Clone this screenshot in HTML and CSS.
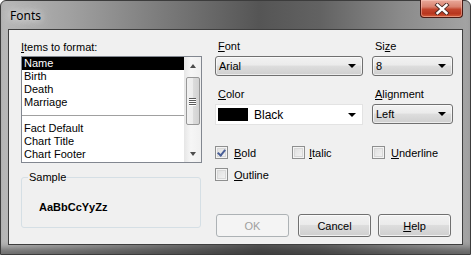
FILE: index.html
```html
<!DOCTYPE html>
<html lang="en">
  <head>
    <meta charset="UTF-8" />
    <title>Fonts</title>
    <link rel="stylesheet" href="styles.css">
  </head>
  <body>
    <div class="window">
      <div class="titlebar">
        <span class="title">Fonts</span>
        <button class="close-btn" aria-label="Close">
          <svg width="16" height="12" viewBox="0 0 16 12">
            <path d="M3.5 2 L12.5 10 M12.5 2 L3.5 10" stroke="#4a2a25" stroke-width="4.2" stroke-linecap="square" />
            <path d="M3.5 2 L12.5 10 M12.5 2 L3.5 10" stroke="#ffffff" stroke-width="2.4" stroke-linecap="square" />
          </svg>
        </button>
      </div>

      <div class="client">
        <div class="left-col">
          <div class="label"><u>I</u>tems to format:</div>
          <div class="listbox">
            <ul class="items">
              <li class="selected">Name</li>
              <li>Birth</li>
              <li>Death</li>
              <li>Marriage</li>
              <li class="separator"></li>
              <li>Fact Default</li>
              <li>Chart Title</li>
              <li>Chart Footer</li>
            </ul>
            <div class="scrollbar">
              <div class="arrow up"></div>
              <div class="thumb"><span></span><span></span><span></span><span></span></div>
              <div class="arrow down"></div>
            </div>
          </div>

          <fieldset class="sample">
            <legend>Sample</legend>
            <div class="sample-text">AaBbCcYyZz</div>
          </fieldset>
        </div>

        <div class="right-col">
          <div class="field-row">
            <div class="field wide">
              <div class="label"><u>F</u>ont</div>
              <div class="combo">Arial</div>
            </div>
            <div class="field narrow">
              <div class="label">Si<u>z</u>e</div>
              <div class="combo">8</div>
            </div>
          </div>

          <div class="field-row second">
            <div class="field wide">
              <div class="label"><u>C</u>olor</div>
              <div class="combo white"><span class="swatch"></span>Black</div>
            </div>
            <div class="field narrow">
              <div class="label"><u>A</u>lignment</div>
              <div class="combo short">Left</div>
            </div>
          </div>

          <div class="checks">
            <label class="check"><span class="box checked"></span><span><u>B</u>old</span></label>
            <label class="check italic"><span class="box"></span><span><u>I</u>talic</span></label>
            <label class="check"><span class="box"></span><span><u>U</u>nderline</span></label>
          </div>
          <div class="checks outline-row">
            <label class="check"><span class="box"></span><span><u>O</u>utline</span></label>
          </div>

          <div class="buttons">
            <button class="btn disabled">OK</button>
            <button class="btn cancel">Cancel</button>
            <button class="btn help"><u>H</u>elp</button>
          </div>
        </div>
      </div>
    </div>
  </body>
</html>
```

FILE: styles.css
```css
body {
  margin: 0;
  background: #ffffff;
  font-family: "Liberation Sans", Arial, sans-serif;
  font-size: 11px;
  color: #000;
}
u {
  text-decoration: underline;
  text-underline-offset: 1px;
}
.window {
  width: 469px;
  height: 253px;
  border: 1px solid #3c3c3c;
  border-radius: 6px 6px 0 0;
  background: linear-gradient(90deg, #b8b8b8 0%, #a0a0a0 15%, #7a7a7a 35%, #555 55%, #626262 68%, #8a8a8a 85%, #a4a4a4 100%);
  display: flex;
  flex-direction: column;
  box-shadow: inset 0 -10px 6px -4px rgba(40, 40, 40, 0.5);
}
.titlebar {
  height: 28px;
  display: flex;
  align-items: flex-start;
  justify-content: space-between;
  padding: 0 7px 0 9px;
}
.title {
  font-family: "Noto Sans", "Open Sans", sans-serif;
  font-size: 12px;
  margin-top: 6px;
  color: #000;
  text-shadow: 0 0 6px #e6e6e6, 0 0 10px #dcdcdc, 0 0 14px #d0d0d0;
}
.close-btn {
  width: 43px;
  height: 18px;
  margin-top: -1px;
  padding: 0;
  border: 1px solid #4a1a14;
  border-top: none;
  border-radius: 0 0 4px 4px;
  background: linear-gradient(180deg, #e9a99b 0%, #d9826f 40%, #c2452d 55%, #b8361f 80%, #d45e3a 100%);
  box-shadow: inset 0 0 0 1px rgba(255, 210, 200, 0.45);
  display: flex;
  align-items: center;
  justify-content: center;
}
.client {
  flex: 1;
  margin: 0 7px 9px 7px;
  border: 1px solid #3e3e3e;
  background: #f0f0f0;
  display: flex;
  padding: 10px 0 0 12px;
  gap: 13px;
}
.label {
  height: 13px;
  line-height: 13px;
  white-space: nowrap;
}

/* left column */
.left-col {
  width: 181px;
  padding-top: 1px;
}
.listbox {
  margin-top: 2px;
  height: 105px;
  border: 1px solid #828790;
  background: #fff;
  display: flex;
}
.items {
  list-style: none;
  margin: 0;
  padding: 0;
  flex: 1;
}
.items li {
  height: 13px;
  line-height: 13px;
  padding-left: 2px;
}
.items li.selected {
  background: #000;
  color: #fff;
}
.items li.separator {
  display: flex;
  align-items: center;
  padding: 0;
}
.items li.separator::after {
  content: "";
  flex: 1;
  height: 1px;
  background: #a0a0a0;
}
.scrollbar {
  width: 17px;
  background: linear-gradient(90deg, #e6e6e6, #f6f6f6 40%, #f0f0f0);
  display: flex;
  flex-direction: column;
  align-items: center;
}
.arrow {
  height: 17px;
  display: flex;
  align-items: center;
  justify-content: center;
}
.arrow::after {
  content: "";
  border-left: 3.5px solid transparent;
  border-right: 3.5px solid transparent;
}
.arrow.up::after {
  border-bottom: 4px solid #4d4d4d;
}
.arrow.down {
  margin-top: auto;
}
.arrow.down::after {
  border-top: 4px solid #4d4d4d;
}
.thumb {
  width: 14px;
  height: 48px;
  margin-top: 3px;
  border: 1px solid #979797;
  border-radius: 2px;
  background: linear-gradient(90deg, #f1f1f1 0%, #ececec 50%, #dcdcdc 51%, #d2d2d2 100%);
  box-sizing: border-box;
  display: flex;
  flex-direction: column;
  align-items: center;
  justify-content: center;
  gap: 1px;
}
.thumb span {
  width: 7px;
  height: 1px;
  background: #5a5a5a;
  box-shadow: 0 1px 0 #fff;
}
.sample {
  margin: 8px 0 0 0;
  padding: 0;
  height: 57px;
  border: 1px solid #d5dfe5;
  border-radius: 3px;
  box-sizing: border-box;
  width: 180px;
}
.sample legend {
  padding: 0 1px;
  margin-left: 6px;
  line-height: 13px;
}
.sample-text {
  margin-top: 17px;
  padding-left: 17px;
  font-weight: bold;
}

/* right column */
.right-col {
  width: 238px;
  display: flex;
  flex-direction: column;
  padding-bottom: 7px;
}
.field-row {
  display: flex;
  gap: 9px;
}
.field-row.second {
  margin-top: 12px;
}
.field.wide {
  width: 148px;
}
.field.narrow {
  width: 81px;
}
.field .label {
  padding-left: 3px;
}
.combo {
  margin-top: 3px;
  height: 20px;
  box-sizing: border-box;
  border: 1px solid #707070;
  border-radius: 3px;
  background: linear-gradient(180deg, #f2f2f2 0%, #ebebeb 45%, #dddddd 50%, #cfcfcf 100%);
  box-shadow: inset 0 0 0 1px rgba(255, 255, 255, 0.6);
  padding-left: 3px;
  line-height: 18px;
  position: relative;
}
.combo::after {
  content: "";
  position: absolute;
  right: 6px;
  top: 7px;
  border-left: 4px solid transparent;
  border-right: 4px solid transparent;
  border-top: 4px solid #000;
}
.combo.white {
  height: 21px;
  border: 1px solid #e3e3e3;
  border-radius: 0;
  background: #fff;
  box-shadow: none;
  display: flex;
  align-items: center;
  padding-left: 2px;
  font-size: 12px;
}
.combo.white::after {
  top: 8px;
}
.swatch {
  width: 30px;
  height: 13px;
  background: #000;
  margin-right: 6px;
}
.checks {
  display: grid;
  grid-template-columns: 77px 80px auto;
  margin-top: 21px;
}
.outline-row {
  margin-top: 9px;
}
.check {
  display: flex;
  align-items: center;
  height: 13px;
  gap: 6px;
}
.check.italic {
  gap: 4px;
}
.box {
  width: 13px;
  height: 13px;
  box-sizing: border-box;
  border: 1px solid #8e8f8f;
  background: linear-gradient(135deg, #dcdcdc, #f6f6f6);
  box-shadow: inset 0 0 0 1px #f4f4f4, inset 0 0 0 2px #d8d8d8;
  position: relative;
}
.box.checked::after {
  content: "";
  position: absolute;
  left: 3px;
  top: 1px;
  width: 3px;
  height: 6px;
  border: solid #4a5f97;
  border-width: 0 2px 2px 0;
  transform: rotate(40deg);
}
.buttons {
  margin-top: auto;
  display: flex;
}
.btn {
  width: 73px;
  height: 23px;
  padding: 0;
  font-family: "Liberation Sans", Arial, sans-serif;
  font-size: 11px;
  color: #000;
  border: 1px solid #707070;
  border-radius: 3px;
  background: linear-gradient(180deg, #f2f2f2 0%, #ebebeb 45%, #dddddd 50%, #cfcfcf 100%);
  box-shadow: inset 0 0 0 1px rgba(255, 255, 255, 0.7);
}
.btn.disabled {
  margin-left: 1px;
  color: #a0a0a0;
  border-color: #adb2b5;
  background: #f4f4f4;
  box-shadow: none;
}
.btn.cancel {
  margin-left: 9px;
}
.btn.help {
  margin-left: 7px;
}
```
